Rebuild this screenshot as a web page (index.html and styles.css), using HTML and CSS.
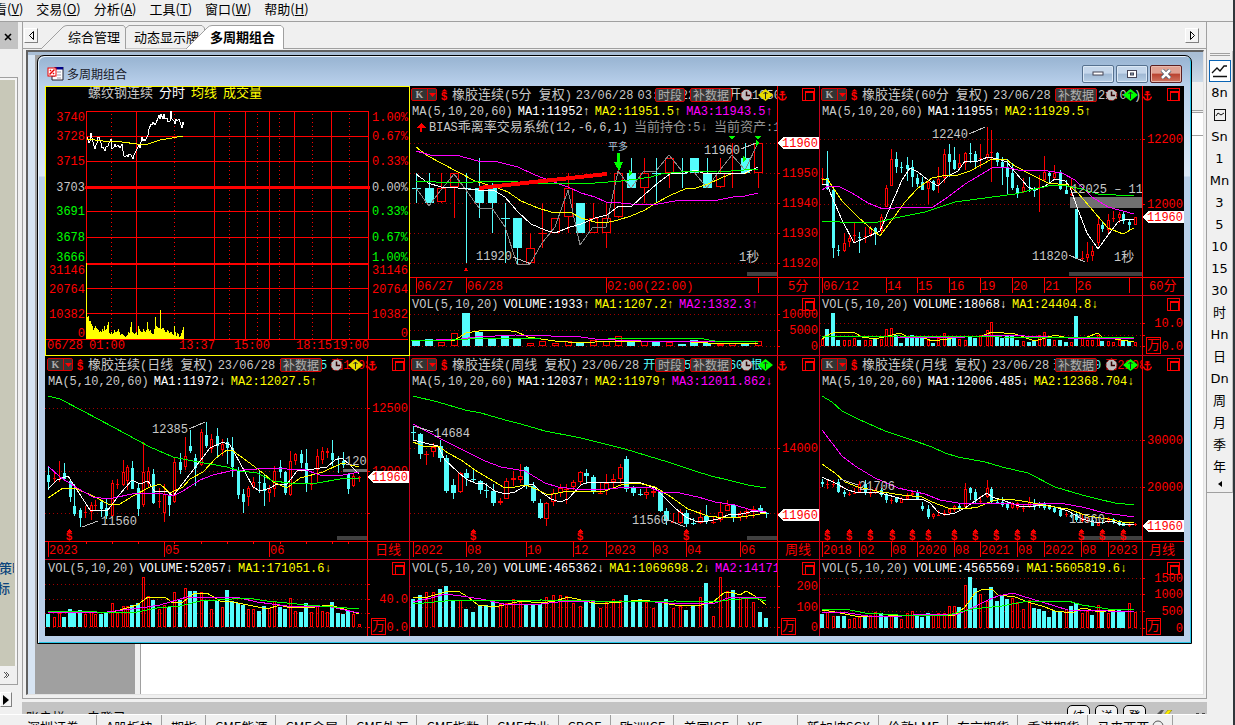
FILE: index.html
```html
<!DOCTYPE html>
<html lang="zh-CN">
<head>
<meta charset="utf-8">
<title>多周期组合</title>
<link rel="stylesheet" href="styles.css">
</head>
<body>
<nav class="menu">
  <a href="#">查看(<u>V</u>)</a><a href="#">交易(<u>O</u>)</a><a href="#">分析(<u>A</u>)</a><a href="#">工具(<u>T</u>)</a><a href="#">窗口(<u>W</u>)</a><a href="#">帮助(<u>H</u>)</a>
</nav>
<div class="app">
  <div class="work">
    <div class="body-row">
      <aside class="dock">
        <div class="dock-head"><button class="plain" aria-label="关闭"><svg width="8" height="8"><path d="M1 1L7 7M7 1L1 7" stroke="#000" stroke-width="1.6"/></svg></button></div>
        <div class="dock-list"><a href="#">策略</a><a href="#">标</a></div>
        <div class="dock-more"><button class="plain" aria-label="更多"><svg width="7" height="8"><path d="M1 1L4 4L1 7M3 1L6 4L3 7" stroke="#555" fill="none"/></svg></button></div>
        <button class="step dock-step" aria-label="下一个"><svg width="6" height="10"><path d="M0 0L6 5L0 10Z"/></svg></button>
      </aside>
      <div class="mid">
        <main class="center">
          <div class="tabs">
            <button class="step" aria-label="向左"><svg width="7" height="9"><path d="M5.500 0.500V8.500L1.500 4.500Z" fill="none" stroke="#000"/></svg></button>
            <button class="tab t1"><svg viewBox="0 0 85 24" preserveAspectRatio="none"><path d="M0 24L22 2Q24 0.500 26 0.500H82.500L84.500 3V24" fill="#f0f0f0" stroke="#a0a0a0"/></svg><span>综合管理</span></button>
            <button class="tab t2"><svg viewBox="0 0 79 24" preserveAspectRatio="none"><path d="M0 3L3 0.500H76L78.500 3V24H0" fill="#f0f0f0" stroke="#a0a0a0"/></svg><span>动态显示牌</span></button>
            <button class="tab t3"><svg viewBox="0 0 98 24" preserveAspectRatio="none"><path d="M0 24L21 3Q23 0.500 26 0.500H95L97.500 3V24" fill="#fff" stroke="#a0a0a0"/></svg><span>多周期组合</span></button>
            <button class="step last" aria-label="向右"><svg width="7" height="9"><path d="M1.500 0.500V8.500L5.500 4.500Z" fill="none" stroke="#000"/></svg></button>
          </div>
          <div class="mdi">
            <div class="back"><div class="back-edge"></div><div class="back-side"></div><div class="back-page"><i class="b1"></i><i class="b2"></i><i class="b3"></i></div></div>
            <section class="window">
              <header class="title">
                <svg width="17" height="14"><path d="M8 0h8v13H5V9h3z" fill="#fff" stroke="#223"/><path d="M8 1h8" stroke="#008" stroke-width="3"/><path d="M10 5h4M10 8h4M10 11h4" stroke="#99a"/><rect x="1" y="1" width="8" height="8" fill="#fff" stroke="#e00"/><path d="M2.500 7.500L7.500 2.500M3 3l1 1M6 6l1 1" stroke="#e00" stroke-width="1.500"/></svg>
                <h1>多周期组合</h1>
                <button class="wb" aria-label="最小化"><svg width="12" height="6"><rect x="1" y="1" width="10" height="3" fill="#fff" stroke="#445"/></svg></button>
                <button class="wb" aria-label="最大化"><svg width="12" height="10"><rect x="1.500" y="1.500" width="9" height="7" fill="#fff" stroke="#445"/><rect x="4.500" y="4" width="3" height="2" fill="#8ab" stroke="#445"/></svg></button>
                <button class="wb close" aria-label="关闭"><svg width="12" height="10"><path d="M2 1L10 9M10 1L2 9" stroke="#456" stroke-width="4"/><path d="M2 1L10 9M10 1L2 9" stroke="#fff" stroke-width="2.500"/></svg></button>
              </header>
              <div class="grid" id="grid"></div>
            </section>
          </div>
        </main>
        <div class="strip"><span class="acct">账户栏</span><span>未登录</span>
          <button class="pill first">结</button><button class="pill">详</button><button class="pill">登</button>
          <svg class="plug" width="52" height="6"><path d="M0 6L6 0H9L5 6Z" fill="#555"/><path d="M8 6L13 0H17L12 6Z" fill="#fe0" stroke="#660" stroke-width=".5"/><path d="M26 5h5M41 4h3M47 4h3" stroke="#222" stroke-width="1.500"/></svg>
        </div>
      </div>
    </div>
    <div class="markets">
      <a href="#" class="m0">深圳证券</a><a href="#">A股板块</a><a href="#">期指</a><a href="#">CME能源</a><a href="#">CME金属</a><a href="#">CME外汇</a><a href="#">CME指数</a><a href="#">CME农业</a><a href="#">CBOE</a><a href="#">欧洲ICE</a><a href="#">美国ICE</a><a href="#">XEurex</a><a href="#">新加坡SGX</a><a href="#">伦敦LME</a><a href="#">东京期货</a><a href="#">香港期货</a><a href="#">马来西亚 <svg width="12" height="12"><circle cx="6" cy="6" r="5" fill="none" stroke="#555"/></svg></a>
    </div>
  </div>
  <aside class="periods">
    <div class="grip"></div>
    <button class="on" aria-label="分时"><svg width="17" height="14"><path d="M1 9L6 4L9 7L13 2H16M2 12.500H16" fill="none" stroke="#111" stroke-width="1.300"/></svg></button>
    <button>8n</button>
    <button aria-label="走势"><svg width="12" height="12"><rect x=".5" y=".5" width="11" height="11" fill="none" stroke="#111"/><path d="M2 7L4 4L7 6L10 4" fill="none" stroke="#111"/></svg></button>
    <button>Sn</button><button>1</button><button>Mn</button><button>3</button><button>5</button><button>10</button><button>15</button><button>30</button><button>时</button><button>Hn</button><button>日</button><button>Dn</button><button>周</button><button>月</button><button>季</button><button>年</button>
    <button class="less" aria-label="收起"><svg width="4" height="6"><path d="M4 0V6L0 3Z"/></svg></button>
  </aside>
</div>
<script src="charts.js"></script>
</body>
</html>
```

FILE: styles.css
```css
* { box-sizing: border-box; }
body { margin: 0; height: 100vh; overflow: hidden; display: flex; flex-direction: column; background: #f0f0f0; color: #000; font: 13px/16px "Noto Sans CJK SC", "Noto Sans", sans-serif; border-right: 2px solid #31373b; }
a { color: inherit; text-decoration: none; }
button { font: inherit; color: inherit; padding: 0; margin: 0; border: 0; background: none; }
svg { display: block; flex: none; }
h1 { margin: 0; font-weight: 400; font-size: 12px; }

.menu { display: flex; gap: 13px; height: 22px; flex: none; border-bottom: 1px solid #a0a0a0; padding-left: 3px; white-space: nowrap; }
.menu a { line-height: 17px; }
.menu a:first-child { margin-left: -22px; }
.app { flex: 1; min-height: 0; display: flex; }
.work { flex: 1; min-width: 0; display: flex; flex-direction: column; }
.body-row { flex: 1; min-height: 0; display: flex; }

.dock { width: 22px; flex: none; display: flex; flex-direction: column; }
.dock-head { width: 18px; height: 27px; background: #c3c3c3; padding: 11px 0 0 4px; }
.dock-list { flex: 1; margin-top: 28px; width: 18px; border: solid #a0a0a0; border-width: 1px 1px 0 0; background: #c8c8b8; box-shadow: inset -2px 2px 0 #f4f4f4; padding-top: 482px; overflow: hidden; color: #0a437c; display: flex; flex-direction: column; gap: 4px; font-weight: 500; }
.dock-list a { white-space: nowrap; width: 15px; overflow: hidden; margin-left: -1px; }
.dock-list a + a { margin-left: -3px; }
.dock-more { width: 18px; height: 19px; border: solid #a0a0a0; border-width: 0 1px 1px 0; padding: 5px 0 0 3px; }
.plain { display: block; }
.step { width: 14px; height: 15px; flex: none; border: 1px solid; border-color: #fff #808080 #808080 #fff; background: #f4f4f4; display: flex; align-items: center; justify-content: center; }
.dock-step { width: 12px; margin: 7px 0 7px; }

.mid { flex: 1; min-width: 0; display: flex; flex-direction: column; }
.center { flex: 1; min-height: 0; display: flex; flex-direction: column; border: solid #a0a0a0; border-width: 0 1px 1px; }
.tabs { height: 27px; flex: none; display: flex; align-items: flex-end; border-bottom: 1px solid #a0a0a0; padding: 0 7px 0 1px; }
.tabs .step { margin-bottom: 5px; }
.tabs .last { margin-left: auto; }
.tab { position: relative; height: 24px; margin-bottom: -1px; white-space: nowrap; }
.tab svg { position: absolute; inset: 0; width: 100%; height: 100%; }
.tab span { position: relative; }
.t1 { width: 85px; margin-left: 3px; padding-left: 27px; text-align: left; }
.t2 { width: 79px; padding-left: 8px; text-align: left; }
.t3 { width: 98px; margin-left: -19px; padding-left: 24px; text-align: left; font-weight: 700; }
.mdi { position: relative; flex: 1; min-height: 0; margin: 1px 2px 3px 3px; border: solid; border-width: 2px 1px 1px 2px; border-color: #606060 #e3e3e3 #e3e3e3 #606060; background: #fff; }
.back { position: absolute; inset: 0; display: flex; border-top: 3px solid #a9bed5; }
.back-edge { width: 7px; background: #d7e4f2; }
.back-side { width: 106px; background: #a0a0a0; border-right: 1px solid #a0a0a0; box-shadow: inset -5px 0 0 #f0f0f0; }
.back-page { flex: 1; }
.back-page i { display: block; }
.b1 { height: 27px; background: linear-gradient(#a9bed5, #ccd9e6); }
.b2 { height: 31px; background: #f0f0f0; border-bottom: 3px double #a0a0a0; }
.b3 { height: 23px; background: #fff; border-bottom: 1px solid #a0a0a0; }

.window { position: absolute; inset: 3px 11px 50px 9px; border: 1px solid #000; border-radius: 7px 7px 0 0; padding: 0 7px 7px; display: flex; flex-direction: column; background: linear-gradient(#97b3d1, #bad1ec 30px, #dbe8f6 120px, #b9cfe9 121px); box-shadow: inset 1px 1px 0 #e8f2fc, inset -1px -1px 0 #28c8ea; }
.title { height: 30px; flex: none; display: flex; align-items: center; gap: 3px; padding: 6px 2px 0; }
.title h1 { flex: 1; color: #181828; }
.wb { width: 32px; height: 18px; margin-top: -1px; border: 1px solid #56718f; border-radius: 2px; background: linear-gradient(#c5d7eb 45%, #9fb8d3 50%, #b8cfe6); box-shadow: inset 0 0 0 1px #dbe8f5; display: flex; align-items: center; justify-content: center; }
.wb + .wb { margin-left: -1px; }
.close { border-color: #5a1f22; background: linear-gradient(#e0a294 45%, #b9412f 50%, #cf7561); box-shadow: inset 0 0 0 1px #eab9ad; }

.grid { flex: 1; min-height: 0; background: #000; display: grid; grid-template-columns: 365fr 410fr 364fr; grid-template-rows: 270fr 280fr; font: 12px/16px "Liberation Mono", "Noto Sans CJK SC", monospace; color: #c8c8c8; }
.cell { min-width: 0; min-height: 0; overflow: hidden; display: flex; flex-direction: column; border-right: 1px solid #c8001e; }
.cell:nth-child(3n) { border-right: 0; }
.cell:nth-child(-n+3) { border-bottom: 1px solid #c8001e; }
.grid .cell.intraday { border: 1px solid #ff0; }
.intraday .names { height: 16px; padding-left: 42px; line-height: 14px; flex: none; display: flex; gap: 6px; font-size: 13px; }
.plot { width: 100%; min-height: 0; overflow: visible; }
.flat { flex: 1; }
.r1 .price { flex: 177 1 0; }
.r1 .vol { flex: 42 1 0; }
.r2 .price { flex: 171 1 0; }
.r2 .vol { flex: 59 1 0; }
.line { display: flex; flex: none; white-space: nowrap; height: 17px; }
.line.ma { height: 16px; }
.main { position: relative; flex: 1; min-width: 0; display: flex; gap: 5px; padding-left: 1px; border-right: 1px solid #f00; }
.text { display: flex; gap: 5px; overflow: hidden; min-width: 0; padding-left: 1px; margin-top: 1px; }
.head .main { gap: 4px; }
.head .text { gap: 4px; padding-left: 0; line-height: 18px; }
.c1 .main { padding-left: 2px; }
.side { width: 41px; flex: none; padding: 2px 0 0 24px; }
.side button { display: block; width: 13px; height: 13px; border: 1px solid #f00; padding: 2px; }
.side button::before { content: ""; display: block; width: 7px; height: 7px; border: 1px solid #f00; border-top-width: 2px; }
.zh { font-size: 13px; line-height: 16px; }
.w { color: #fff; } .y { color: #ff0; } .m { color: #f0f; } .cy { color: #54fcfc; } .r { color: #f00; }
.kbtn { display: flex; width: 26px; height: 13px; margin-top: 2px; flex: none; border: 1px solid #d00; border-radius: 2px; background: #333; color: #aaa; font: 700 10px/11px "Liberation Serif", serif; }
.kbtn span { width: 16px; border-right: 1px solid #d00; text-align: center; }
.kbtn svg { margin: 4px 0 0 1px; }
.gap-s { margin-top: 3px; }
.tools { position: absolute; right: -10px; top: 2px; display: flex; align-items: center; gap: 5px; }
.tools .fn { height: 14px; border: 1px solid #d00; border-radius: 2px; background: #383838; color: #b0b0b0; font: 12px/12px "Noto Sans CJK SC", sans-serif; padding: 0 2px; }
.tools .clock { margin-left: 3px; }

.plot text { fill: #c8c8c8; }
.plot text.r, .plot text.lab { fill: #f00; }
.plot text.g { fill: #0f0; }
.plot text.dim { fill: #909090; }
.plot text.small { font-size: 10px; fill: #a8c4dc; }
.plot g { shape-rendering: crispEdges; }

.strip { height: 12px; margin-top: 3px; background: #c3c3c3; overflow: hidden; display: flex; padding: 7px 0 0 4px; white-space: nowrap; }
.acct { margin-right: 22px; }
.pill { width: 23px; height: 22px; margin: -4px 5px 0 0; flex: none; border: 1px solid #000; border-radius: 5px; background: #f0f0f0; font-size: 12px; }
.pill.first { margin-left: auto; }
.plug { margin: 1px 0 0 4px; }
.markets { height: 11px; flex: none; overflow: hidden; display: flex; margin-right: 2px; border-top: 1px solid #fff; padding-left: 18px; }
.markets a { flex: none; height: 24px; padding: 4px 8px 0 9px; border-right: 1px solid #a0a0a0; white-space: nowrap; }
.markets a svg { display: inline-block; }
.markets .m0 { padding-right: 17px; }

.periods { width: 26px; flex: none; align-self: flex-start; margin-top: 29px; border-bottom: 1px solid #a0a0a0; border-right: 1px solid #c0c0c0; padding: 2px 0 2px; display: flex; flex-direction: column; align-items: center; }
.grip { width: 20px; height: 3px; border: solid #a0a0a0; border-width: 1px 0; margin-bottom: 4px; }
.periods button { width: 22px; height: 22px; display: flex; align-items: center; justify-content: center; font: 13px/16px "DejaVu Sans", "Noto Sans CJK SC", sans-serif; }
.periods .on { border: 1px solid #0a64b4; background: #fff; }
.periods .less { height: 12px; }
```

FILE: charts.js
```js
// Chart data is kept on a grid of thirds of a pixel; each panel has its own origin.
const GRID = 3;
const X60A = [22,37,55,70,86,103,118,133,151,166,181,197,212,229,244,259,277,292,307,322,340,355,370,388,403,418,433,451,466,481,496,515,529,545,562,577,592,607,625,641,656,673,688,703,718,736,752,767,784,800,815,830,848,862,878,893,911,925,941,959];

const panels = [
{ col: 2, row: 1, o: [408,80], box: [410,819], axis: 1107, half: 13,
  name: ['橡胶连续','(5','分',' ','复权',')'], after: '<span>03:00(22:00)</span>', next: '<span class="zh">开</span><span>11950</span>', period: true, dia: '#e6dc00',
  ma: [['MA1:11952↑','w'],['MA2:11951.5↑','y'],['MA3:11943.5↑','m']],
  vl: [['VOLUME:1933↑','w'],['MA1:1207.2↑','y'],['MA2:1332.3↑','m']],
  grid: [190,280,370,460,550], vgrid: [703,751], base: 797,
  labels: [[280,'11950'],[370,'11940'],[460,'11930'],[550,'11920'],[703,'10000'],[751,'5000'],[799,'0']],
  times: [[25,'06/27'],[175,'06/28'],[595,'02:00(22:00)'],[1051,'']], unit: [1139,'5分'], tag: 190, lines: [592,646], bar: [1017,581],
  x: [25,62,100,139,175,214,253,290,328,367,403,442,481,517,556,595,631,670,709,745,784,823,859,898,937,973,1012,1051],
  c: 'd 280 370 325 325|d 280 370 325 368|u 280 370 325 367|u 280 413 280 322|d 280 550 325 325|d 235 413 325 370|d 310 460 325 370|d 370 548 415 415|d 415 552 415 504|u 460 552 505 550|u 370 505 460 460|u 415 460 415 460|u 280 460 325 412|d 370 460 370 460|u 370 460 415 458|u 370 503 415 458|u 270 415 280 412|d 235 323 280 323|u 235 368 280 323|d 235 368 280 280|u 235 325 235 278|d 235 325 280 280|d 235 278 235 278|d 235 323 280 323|u 235 323 280 322|u 190 323 280 280|d 190 280 235 280|u 190 323 190 278',
  v: [780,777,785,760,700,755,777,766,777,790,782,790,783,787,780,783,769,784,782,784,787,792,781,788,793,788,790,782],
  curves: [
   ['#888','25,325 62,379 100,330 139,282 175,330 214,385 253,385 290,440 328,552 367,553 403,490 442,440 481,330 517,496 556,442 595,442 631,272 670,323 709,274 745,274 784,226 823,272 859,276 898,323 937,270 973,226 1012,270 1051,190'],
   ['#ff0','25,202 60,228 100,250 150,275 200,303 260,322 300,335 340,362 390,385 430,397 485,397 520,413 560,425 590,428 630,420 670,409 710,390 745,370 790,345 830,328 865,325 900,313 940,295 975,280 1015,280 1050,262'],
   ['#f0f','25,214 65,225 145,226 210,244 270,245 330,260 380,285 430,303 480,322 520,340 560,352 595,367 640,370 700,374 750,372 820,361 930,361 975,352 1010,348 1050,338'],
   ['#fff','25,283 60,308 100,322 150,325 210,331 260,334 290,350 330,397 370,433 410,451 440,460 485,442 520,433 560,415 597,406 632,379 672,379 710,343 750,310 785,283 830,278 860,271 885,280 1010,280 1050,262'],
   ['#0f0','25,304 140,308 250,304 330,307 390,310 500,309 560,308 640,304 690,298 730,290 760,282 820,276 930,274 970,273 1050,268'],
   ['#f00','214,325 598,281',4]],
  vcurves: [
   ['#ff0','10,781 140,781 175,760 214,753 290,750 328,755 360,772 400,778 440,784 480,786 560,785 620,783 800,784 850,786 900,788 1050,790'],
   ['#f0f','10,782 160,778 200,770 320,766 430,768 520,772 560,778 620,781 700,783 800,784 950,785 1050,787'],
   ['#0f0','10,781 130,781 180,776 400,773 600,775 870,775 920,782 1050,784']],
  texts: [[64,142,'BIAS乖离率交易系统(12,-6,6,1)'],[679,142,'当前持仓:5↓','dim'],[918,142,'当前资产:1','dim'],[600,199,'平多','small'],[888,209,'11960'],[203,529,'11920'],[992,532,'1秒']],
  ptr: ['1000,208 1045,190','315,530 370,551'], marks: 'trade' },
{ col: 3, row: 1, o: [815,80], box: [820,1184], axis: 981, half: 4,
  name: ['橡胶连续','(60','分',' ','复权',')'], after: '<span>10:00(21:00)</span>', next: '', dia: '#0f0',
  ma: [['MA1:11955↑','w'],['MA2:11929.5↑','y']], vl: [['VOLUME:18068↓','w'],['MA1:24404.8↓','y']],
  grid: [178,373], vgrid: [730,766], base: 797, labels: [[178,'12200'],[373,'12000'],[730,'10.0'],[799,'0.0']], wan: 797,
  times: [[22,'06/12'],[212,'14'],[307,'15'],[403,'16'],[496,'19'],[592,'20'],[688,'21'],[784,'26'],[941,'']], unit: [1003,'60分'], tag: 412, lines: [592,646], bar: [762,581], band: [765,351,34],
  x: X60A,
  c: 'u 265 315 295 295|d 213 330 295 328|d 325 533 330 503|d 495 527 510 510|u 460 517 490 512|u 463 500 473 487|u 430 487 466 466|d 457 518 472 472|u 440 488 468 468|u 437 472 444 463|d 440 495 443 458|u 402 463 412 452|u 315 382 325 380|u 208 318 238 317|d 217 278 237 262|d 245 280 262 262|d 231 303 255 268|d 240 320 262 290|d 282 322 295 313|d 290 330 305 330|u 300 373 305 328|d 300 333 303 330|u 262 340 298 313|u 208 310 222 293|d 192 290 222 246|d 200 270 240 268|u 222 270 250 263|u 215 270 218 250|d 190 250 218 218|d 213 262 222 245|u 192 265 235 235|u 140 240 222 235|u 150 305 216 216|d 215 258 218 246|d 230 315 246 262|d 238 342 262 290|d 250 330 278 325|d 315 353 325 340|u 295 340 322 335|d 292 335 322 322|d 322 352 330 330|u 285 395 320 320|u 228 305 275 300|d 275 310 278 288|u 255 300 280 293|d 270 330 275 328|d 300 342 330 342|u 293 348 342 342|d 387 537 387 537|u 513 543 535 535|u 487 547 522 533|u 498 543 513 528|u 415 497 433 488|d 422 455 435 448|u 402 465 420 450|u 393 425 415 415|u 397 430 402 415|d 397 433 402 422|d 420 450 426 434|u 410 435 412 434',
  v: [778,748,700,780,779,781,775,779,779,779,773,778,748,745,766,788,773,766,770,775,780,788,773,760,772,773,778,781,769,773,766,750,727,766,775,768,767,780,782,787,779,766,755,778,779,779,785,787,708,775,779,780,766,782,782,786,780,779,783,787],
  curves: [
   ['#fff','20,313 36,313 50,350 80,420 118,490 150,473 195,453 220,395 260,300 285,263 310,275 340,300 370,317 400,288 430,272 450,242 490,242 520,230 550,237 575,247 600,275 640,320 660,330 690,317 720,298 750,302 765,320 785,380 815,460 848,508 880,465 910,425 930,418 958,418'],
   ['#ff0','20,298 38,300 80,362 130,410 160,437 195,468 230,420 270,367 310,325 350,293 380,288 430,286 465,272 530,237 575,240 600,257 650,285 700,310 760,315 790,340 840,398 880,443 925,463 957,444'],
   ['#f0f','20,330 40,319 70,319 110,340 160,370 205,388 280,380 355,381 400,352 450,313 530,263 570,262 610,271 700,273 740,280 780,300 830,350 880,382 957,402'],
   ['#0f0','20,427 60,424 90,428 190,426 240,413 330,395 420,367 530,351 600,342 710,315 740,314 800,328 850,341 957,349']],
  vcurves: [
   ['#ff0','20,778 40,765 60,755 120,758 140,770 180,778 220,768 255,760 280,770 320,772 350,782 400,778 420,770 500,768 530,757 600,762 660,783 720,765 760,775 780,770 815,770 848,760 860,770 900,778 957,785'],
   ['#f0f','20,770 60,768 160,768 250,770 350,775 450,770 560,765 700,770 760,775 957,775'],
   ['#0f0','20,772 250,768 560,770 957,775']],
  texts: [[350,161,'12240'],[769,326,'12025 – 119'],[650,527,'11820'],[898,532,'1秒']], ptr: ['462,161 510,142','762,526 810,547'] },
{ col: 1, row: 2, o: [40,350], box: [45,409], axis: 981, half: 4,
  name: ['橡胶连续','(','日线',' ','复权',')'], after: '<span class="cy">开12055</span>', next: '<span class="r">高12085</span>', dia: '#e6dc00',
  ma: [['MA1:11972↓','w'],['MA2:12027.5↑','y']], vl: [['VOLUME:52057↓','w'],['MA1:171051.6↓','y']],
  grid: [175,364,488], vgrid: [703,748,790], base: 830, labels: [[175,'12500'],[364,'12000'],[748,'40.0'],[832,'0.0']], wan: 830,
  times: [[25,'2023'],[373,'05'],[688,'06']], ticks: [137,215,295,403,484,562,640,721,799,877,925], unit: [1005,'日线'], tag: 380, lines: [574,628], bar: [891,563], band: [908,357,8],
  x: [25,41,58,73,89,103,121,136,152,166,184,199,215,232,248,262,277,295,310,325,340,358,373,388,403,421,436,451,466,484,499,514,532,547,562,577,595,610,625,640,658,673,688,703,721,736,751,766,784,799,814,832,847,862,877,895,910,925,940,958],
  c: 'd 350 420 375 395|u 370 398 385 385|u 333 396 387 387|d 340 390 370 386|d 386 455 393 440|d 402 498 467 492|d 474 530 480 503|u 468 505 487 487|u 455 510 465 485|u 450 482 465 465|d 450 502 455 478|d 445 507 475 498|u 390 502 400 497|u 388 417 403 403|u 330 407 365 405|u 345 420 350 392|d 333 418 353 416|d 400 497 413 477|u 277 470 367 465|u 350 410 362 402|d 358 462 373 460|u 415 473 452 452|u 402 515 433 490|d 433 497 434 465|u 325 460 337 455|d 308 373 336 360|u 260 360 317 352|d 240 308 287 302|d 312 408 325 355|u 238 347 247 345|d 215 293 256 288|u 252 310 267 297|d 233 323 258 288|u 267 317 282 300|d 265 343 277 295|d 262 382 294 352|d 350 447 362 436|d 417 488 433 455|u 408 467 413 440|u 382 417 395 410|d 360 430 397 397|d 375 467 400 424|u 405 457 418 430|u 348 442 362 418|d 330 383 350 365|d 363 435 367 430|u 303 437 332 435|u 308 345 313 332|d 300 355 312 338|d 297 425 338 402|u 378 420 402 402|u 297 395 318 360|u 290 343 303 330|u 293 325 303 308|d 270 347 308 330|d 318 370 325 325|d 307 353 333 346|d 368 432 372 418|u 370 412 378 408|u 378 395 382 382',
  v: [792,800,790,800,777,787,780,793,787,793,792,790,760,785,769,769,765,759,682,738,750,778,765,770,727,750,715,723,723,725,752,778,753,771,720,753,759,766,778,778,783,768,775,752,771,777,745,784,786,759,787,768,784,786,756,790,791,784,793,823],
  curves: [
   ['#fff','25,418 50,390 85,378 110,420 150,480 200,482 240,433 275,390 300,403 325,394 345,425 380,422 400,437 430,400 470,345 510,295 550,276 570,285 600,340 640,412 660,422 690,415 710,403 740,403 770,362 800,360 860,350 885,330 905,324 930,345 957,372'],
   ['#ff0','25,445 70,415 110,416 160,438 210,465 240,462 280,437 330,412 360,402 390,430 430,410 450,387 490,365 530,320 560,300 580,302 620,332 670,368 700,397 740,413 780,383 850,367 905,340 957,352'],
   ['#f0f','25,349 60,382 110,415 160,440 205,448 290,428 370,433 400,438 430,423 480,390 520,375 570,362 650,358 705,353 740,357 790,358 840,375 910,375 957,367'],
   ['#0f0','25,138 60,148 130,182 220,232 330,292 400,322 460,334 560,350 600,362 650,370 700,393 750,400 830,400 900,387 957,385']],
  vcurves: [
   ['#ff0','25,790 100,785 160,788 215,785 240,780 290,765 325,742 375,742 400,760 430,755 465,728 500,728 540,752 580,755 640,767 680,777 720,765 740,770 800,773 870,765 920,780 957,793'],
   ['#f0f','25,790 200,787 300,775 360,765 440,742 600,745 650,757 740,768 860,768 900,778 957,788'],
   ['#0f0','25,784 100,784 170,787 290,786 350,773 420,767 480,752 530,750 620,745 680,752 800,765 920,773 957,777']],
  texts: [[335,237,'12385'],[183,513,'11560'],[914,333,'1202']], ptr: ['447,236 495,216','125,532 175,512'], dollars: [87] },
{ col: 2, row: 2, o: [408,350], box: [410,819], axis: 1107, half: 7,
  name: ['橡胶连续','(','周线',' ','复权',')'], after: '<span class="cy">开12085</span>', next: '<span class="cy">收11960 根</span>', period: true, dia: '#0f0',
  ma: [['MA1:12037↑','w'],['MA2:11979↑','y'],['MA3:12011.862↓','m']], vl: [['VOLUME:465362↓','w'],['MA1:1069698.2↓','y'],['MA2:1417103.6','m']],
  grid: [295,488], vgrid: [709,771], base: 830, labels: [[295,'14000'],[709,'200'],[771,'100'],[832,'0']], wan: 830,
  times: [[16,'2022'],[175,'08'],[355,'10'],[496,'12'],[595,'2023'],[736,'03'],[835,'04'],[997,'06']], unit: [1130,'周线'], tag: 494, lines: [574,628], bar: [1017,563],
  x: [16,37,55,76,97,115,136,157,175,196,217,235,256,277,295,316,337,355,376,397,415,436,457,475,496,517,535,556,577,595,616,637,655,676,697,715,736,757,775,796,817,835,856,877,895,916,937,956,976,997,1015,1036,1057,1075],
  c: 'd 228 270 246 246|d 248 327 252 312|u 303 345 313 313|u 280 320 292 306|d 270 337 288 323|d 315 428 324 423|d 388 447 405 430|u 367 428 370 427|d 358 408 370 383|d 360 400 388 388|d 390 432 393 420|d 400 443 420 420|d 402 468 423 460|u 443 466 452 458|u 385 448 394 446|u 362 408 384 391|u 342 400 378 390|d 347 418 351 408|d 396 460 408 453|d 448 508 460 503|u 455 527 460 506|u 417 467 430 455|u 403 440 415 430|u 402 462 417 417|u 390 420 397 410|u 363 407 367 395|d 357 403 369 378|d 375 432 381 424|u 397 430 428 428|u 372 434 400 421|u 372 410 388 395|u 342 402 350 388|d 318 425 327 417|d 408 437 413 430|d 418 438 433 433|u 413 448 427 436|u 417 442 424 430|d 424 485 427 483|d 475 525 483 513|u 490 520 515 515|u 478 522 487 518|d 480 530 488 522|d 505 525 520 520|u 480 522 500 520|d 465 523 498 513|u 498 523 515 515|u 458 515 486 510|u 450 484 466 482|d 463 517 465 500|u 483 512 490 500|u 473 507 482 493|u 467 503 478 478|d 465 487 474 484|d 485 503 490 490',
  v: [747,735,725,725,717,708,752,749,777,786,765,765,756,763,760,748,756,765,762,762,740,736,736,739,760,769,752,755,773,757,748,749,735,750,748,755,773,755,747,773,769,780,766,742,699,797,682,722,720,740,745,755,786,804],
  curves: [
   ['#fff','16,270 50,280 90,288 110,330 150,365 175,388 200,400 230,402 260,423 290,431 320,427 350,408 375,402 400,425 430,448 457,455 480,447 520,405 540,396 600,396 660,396 700,400 740,415 770,445 800,475 835,500 860,512 900,512 930,508 960,495 1000,493 1040,483 1075,490'],
   ['#ff0','16,275 50,290 90,288 120,310 160,330 200,360 240,385 290,415 320,412 355,405 390,420 420,435 450,428 480,424 590,424 640,405 690,398 740,412 790,440 840,478 900,498 950,505 1000,502 1040,496 1075,490'],
   ['#f0f','16,222 60,245 110,272 170,303 230,332 280,350 350,363 410,398 450,410 500,418 550,420 600,417 660,411 730,413 760,425 800,426 870,440 920,456 980,466 1030,480 1075,487'],
   ['#0f0','16,138 90,155 170,181 220,188 290,210 340,222 410,243 520,263 590,283 650,296 720,318 780,337 860,362 910,378 960,391 1020,404 1075,415']],
  vcurves: [
   ['#ff0','16,742 60,740 110,725 150,724 180,740 210,765 260,772 300,762 340,752 400,760 440,752 480,741 520,750 570,763 640,757 700,750 750,757 800,765 880,765 915,757 950,727 970,725 995,735 1015,724 1040,737 1075,765'],
   ['#f0f','16,755 70,745 110,733 160,738 220,748 300,765 400,763 450,755 550,752 640,755 700,752 780,758 850,762 920,760 960,745 1030,740 1075,745'],
   ['#0f0','16,763 110,752 400,750 560,752 640,757 800,752 920,755 960,750 1040,745 1075,752']],
  texts: [[79,248,'14684'],[672,509,'11560']], ptr: ['18,228 75,246','775,506 832,530'], dollars: [194,516,834] },
{ col: 3, row: 2, o: [815,350], box: [820,1184], axis: 981, half: 4,
  name: ['橡胶连续','(','月线',' ','复权',')'], after: '<span class="cy">开12080</span>', next: '<span class="r">高22085</span>', dia: '#0f0',
  ma: [['MA1:12006.485↓','w'],['MA2:12368.704↓','y']], vl: [['VOLUME:4565569↓','w'],['MA1:5605819.6↓','y']],
  grid: [271,412], vgrid: [685,733,783], base: 833, labels: [[271,'30000'],[412,'20000'],[685,'1500'],[733,'1000'],[783,'500'],[835,'0']], wan: 830,
  times: [[22,'2018'],[133,'02'],[229,'08'],[307,'2020'],[418,'08'],[496,'2021'],[607,'08'],[688,'2022'],[799,'08'],[878,'2023']], unit: [1003,'月线'], tag: 527, lines: [574,628], bar: [800,563],
  x: X60A,
  c: 'd 388 412 395 402|u 388 417 403 403|u 390 410 402 402|d 388 430 397 426|d 420 440 425 433|u 425 437 432 432|u 413 433 430 430|u 393 430 402 427|d 390 435 403 430|u 415 440 430 430|u 415 432 420 430|d 415 440 420 436|d 428 460 435 450|u 445 462 450 450|d 440 460 445 456|u 440 460 445 458|u 430 450 438 446|u 420 440 430 435|d 420 450 427 447|d 455 483 468 478|d 465 507 478 500|u 488 508 493 502|u 480 497 495 495|u 480 498 490 490|u 473 495 478 490|u 465 485 468 480|d 462 480 467 474|u 400 475 418 470|d 410 450 413 430|d 417 460 425 450|u 437 460 452 452|u 390 445 415 440|d 410 458 417 455|d 450 462 457 457|d 440 470 455 465|d 455 480 462 475|u 455 478 462 474|u 455 480 460 475|u 465 487 475 475|u 440 475 457 470|d 447 480 462 470|d 457 475 465 465|d 455 480 460 473|d 465 480 470 476|d 470 488 475 485|d 475 502 480 497|u 485 500 493 493|d 485 505 495 495|d 488 517 493 510|u 495 520 503 513|u 500 518 510 510|d 500 528 510 527|u 515 528 520 527|d 510 522 516 516|u 500 520 505 517|d 505 522 507 515|d 510 527 515 525|d 515 528 520 527|u 517 530 525 525|u 518 528 522 522',
  v: [792,785,797,797,797,806,803,800,802,795,785,790,797,798,800,808,790,782,798,802,790,792,790,790,769,768,771,706,681,714,733,754,711,753,738,747,745,757,778,750,774,777,783,801,783,787,778,768,760,788,782,796,766,785,788,780,780,783,760,785],
  curves: [
   ['#fff','22,382 60,400 100,420 120,427 180,425 220,435 260,447 320,447 345,460 370,485 390,494 420,490 450,475 480,452 515,430 530,440 570,452 620,470 700,465 760,483 800,507 850,520 890,513 920,525 957,522'],
   ['#ff0','22,343 60,370 90,395 130,410 200,427 260,435 320,442 350,455 400,473 450,477 490,472 530,453 560,447 600,450 640,457 700,467 760,478 820,497 880,508 920,517 957,519'],
   ['#f0f','22,241 50,280 80,318 120,348 180,383 250,415 330,433 375,450 430,458 550,460 640,465 700,460 750,461 800,472 870,488 957,500'],
   ['#0f0','22,139 50,157 80,182 130,208 210,244 290,270 350,292 390,310 430,322 510,336 560,350 640,370 720,412 800,436 850,447 900,460 957,466']],
  vcurves: [
   ['#ff0','22,780 60,785 120,798 160,802 220,797 300,796 420,795 450,772 480,730 505,718 530,718 550,735 600,742 640,755 690,770 720,783 770,788 800,775 820,777 850,785 900,780 957,778'],
   ['#f0f','22,786 100,790 160,797 260,797 330,793 430,793 470,775 520,750 550,738 595,728 620,738 680,757 720,768 760,780 880,783 957,782'],
   ['#0f0','22,778 90,778 150,788 250,795 400,795 470,777 560,767 640,752 760,752 800,765 880,778 957,780']],
  texts: [[131,407,'21706'],[762,508,'11560']], ptr: ['75,388 128,405'], dollars: [37,101,164,230,291,339,417,480,542,605,654,798,860,924] }
];

function pen(o) {
  const X = x => Math.round(o[0] + x / GRID), Y = y => Math.round(o[1] + y / GRID);
  const zh = s => s.replace(/[\u4e00-\u9fff]+/g, m => `<tspan font-size="13">${m}</tspan>`);
  return {
    X, Y,
    v: (x, a, b, c, e = '') => `<path d="M${X(x)}.5 ${Y(a)}V${Y(b)}" stroke="${c}" ${e}/>`,
    h: (y, a, b, c, e = '') => `<path d="M${X(a)} ${Y(y)}.5H${X(b)}" stroke="${c}" ${e}/>`,
    r: (x, y, w, h, e) => `<rect x="${x}" y="${y}" width="${w}" height="${h}" ${e}/>`,
    t: (x, y, s, c = '', a = 'start') => `<text x="${X(x)}" y="${Y(y) + 4}" class="${c}" text-anchor="${a}">${c === 'small' ? s : zh(s)}</text>`,
    c: ([c, p, w = 1]) => `<polyline fill="none" stroke="${c}" stroke-width="${w}" points="${p.split(' ').map(q => { const [x, y] = q.split(','); return X(+x) + ',' + Y(+y); }).join(' ')}"/>`
  };
}
const svg = (cls, x, y, w, h, s) => `<svg class="plot ${cls}" viewBox="${x} ${y} ${w} ${h}" preserveAspectRatio="xMinYMin meet"><g>${s}</g></svg>`;
const RED = '#f00', CY = '#54fcfc', DOT = 'stroke-dasharray="1 3"';
const dollarIcon = '<svg class="gap-s" width="7" height="12"><path d="M3.500 0L6.500 2.500H0.500Z" fill="#f00"/><text x="0" y="11" font-size="11" font-weight="700" fill="#f00" font-family="Liberation Sans">$</text></svg>';
const clock = '<svg class="clock" width="13" height="12"><circle cx="6.500" cy="6" r="5.500" fill="#c0c0c0" stroke="#a00" stroke-dasharray="2 2"/><path d="M6.500 2.500V6.500H10" stroke="#300" stroke-width="1.500" fill="none"/></svg>';
const diamond = c => `<svg width="15" height="12"><path d="M7.500 0L15 6L7.500 12L0 6Z" fill="${c}"/><path d="M7.500 10V3M5.500 5L7.500 3L9.500 5" stroke="#222" fill="none"/></svg>`;
const anchor = '<svg width="9" height="11"><path d="M4.500 1V10M2.500 2H6.500M1.500 4.500H7.500M0.500 6.500Q1 9.500 4.500 10Q8 9.500 8.500 6.500" stroke="#f00" stroke-width="1.500" fill="none"/></svg>';
const boxBtn = '<div class="side"><button aria-label="最大化"></button></div>';

function intraday() {
  const p = pen([40, 80]);
  let s = '';
  [92,167,244,394,472,625,700].forEach(y => s += p.h(y, 139, 985, RED));
  [139,287,523,616,688,763,874,985].forEach(x => s += p.v(x, 92, 777, RED));
  [212,403,568,652,717,817,928].forEach(x => s += p.v(x, 102, 777, RED, DOT));
  s += p.h(320, 136, 990, RED, 'stroke-width="3"') + p.h(548, 139, 985, RED, 'stroke-width="2"') + p.h(777, 18, 1105, RED);
  const vol = [66,60,68,55,54,44,40,28,32,40,34,30,26,22,24,20,30,24,40,26,22,30,42,50,18,16,20,15,18,28,22,20,24,30,22,12,16,14,12,10,6,4,8,12,22,18,36,52,20,18,14,18,22,12,38,30,24,20,22,30,24,18,20,28,50,30,24,26,18,14,16,30,66,40,36,34,32,86,30,32,34,22,26,20,22,28,24,18,20,22,16,12,38,20,10,18,14,6,8,18,26,36];
  const n = vol.length;
  vol.forEach((v, i) => { const h = Math.round(v / GRID); s += p.r(87 + Math.floor(i * 97 / n), 339 - h, 1, h, 'fill="#ff0"'); });
  s += p.v(139, 549, 777, '#ff0');
  s += p.c(['#fff', '142,170 145,180 148,190 151,182 154,158 156,175 160,185 164,207 168,195 171,190 175,172 178,170 182,188 187,203 190,200 194,213 198,200 203,197 206,190 210,183 214,178 217,207 221,200 225,193 229,202 234,196 240,203 246,193 250,212 253,228 256,232 260,226 264,232 268,222 273,224 278,238 283,226 287,213 292,208 296,195 299,203 302,185 305,170 309,182 313,178 316,184 321,172 325,165 328,146 332,132 336,136 340,125 344,135 348,128 353,115 356,106 360,116 364,103 368,116 372,102 376,118 381,115 384,127 389,122 391,104 394,92 397,118 401,122 404,133 408,118 412,122 416,116 421,125 425,145 428,126 431,136']);
  s += p.c(['#ff0', '142,176 190,182 245,187 290,193 325,193 360,180 395,173 428,169']);
  const L = ['3740','3728','3715','3703','3691','3678','3666','31146','20764','10382','0'];
  const R = ['1.00%','0.67%','0.33%','0.00%','0.33%','0.67%','1.00%','31146','20764','10382','0'];
  [110,167,244,320,394,472,530,569,626,701,758].forEach((y, i) => {
    const c = i === 3 ? '' : i > 3 && i < 7 ? 'g' : 'lab';
    s += p.t(136, y, L[i], c, 'end') + p.t(1104, y, R[i], c, 'end');
  });
  [[22,'06/28'],[148,'01:00'],[417,'13:37'],[583,'15:00'],[768,'18:15'],[878,'19:00']].forEach(([x, t]) => s += p.t(x, 796, t, 'lab'));
  return `<div class="cell intraday"><div class="names"><span>螺纹钢连续</span><span class="w">分时</span><span class="y">均线</span><span class="y">成交量</span></div>${svg('flat', 46, 103, 363, 252, s)}</div>`;
}

function panel(d) {
  const p = pen(d.o), { X, Y } = p, w = d.box[1] - d.box[0], left = (d.box[0] - d.o[0]) * GRID, ax = d.axis, right = (d.box[1] - d.o[0]) * GRID;
  const top = d.row === 1 ? 119 : 389, mid = d.row === 1 ? 296 : 560, vt = mid + 17, end = d.row === 1 ? 355 : 636;
  const clip = `clip${d.col}${d.row}`;
  let s = `<clipPath id="${clip}"><rect x="${d.box[0]}" y="${top}" width="${X(ax) - d.box[0]}" height="${mid - top}"/></clipPath>`, q = '';
  const hb = Math.round(d.half / GRID);
  d.grid.forEach(y => s += p.h(y, left, ax, '#a00000', DOT) + p.h(y, ax, ax + 9, RED));
  [...d.vgrid, d.base].forEach(y => q += p.h(y, left, ax, '#a00000', DOT) + p.h(y, ax, ax + 9, RED));
  if (d.band) s += p.r(X(d.band[0]), Y(d.band[1]), X(ax) - X(d.band[0]), Math.round(d.band[2] / GRID), 'fill="#707070"');
  s += p.r(X(d.bar[0]), Y(d.bar[1]) - 2, X(ax) - X(d.bar[0]), 4, 'fill="#404040"');
  d.c.split('|').forEach((k, i) => {
    const [u, ...n] = k.split(' '), [hi, lo, a, b] = n.map(Number), x = d.x[i], col = u === 'u' ? RED : CY, x0 = X(x) - hb, W = hb * 2 + 1;
    const H = Y(b) - Y(a);
    if (H < 2) s += p.v(x, hi, lo, col) + p.r(x0, Y(a), W, 1, `fill="${col}"`);
    else if (u === 'u') s += p.v(x, hi, a, col) + p.v(x, b, lo, col) + `<rect x="${x0}.5" y="${Y(a)}.5" width="${W - 1}" height="${H - 1}" fill="none" stroke="${col}"/>`;
    else s += p.v(x, hi, lo, col) + p.r(x0, Y(a), W, H, `fill="${col}"`);
    const vy = Y(d.v[i]), vh = Y(d.base) - vy, vb = Math.max(hb, 2);
    q += u === 'u' ? `<rect x="${X(x) - vb + 1}.5" y="${vy}.5" width="${vb * 2 - 2}" height="${Math.max(vh - 1, 1)}" fill="none" stroke="${RED}"/>` : p.r(X(x) - vb, vy, vb * 2, vh, `fill="${CY}"`);
  });
  d.curves.forEach(c => s += p.c(c));
  d.vcurves.forEach(c => q += p.c(c));
  d.ptr.forEach(t => s += p.c(['#c0c0c0', t]));
  s += `<g clip-path="url(#${clip})">${d.texts.map(t => p.t(...t)).join('')}</g>`;
  if (d.marks) {
    s += '<path d="M416 128L421 123L426 128H422V132H420V128Z" fill="#f00"/><path d="M617 153h3v9h3l-4 9-5-9h3z" fill="#0f0"/>';
    [[732,136],[758,136]].forEach(([x, y]) => s += `<path d="M${x - 3} ${y}h6l-3 4z" fill="#0f0"/>`);
    [[630,173],[744,159],[757,143]].forEach(([x, y]) => s += `<path d="M${x - 1} ${y - 3}l3 3-3 4z" fill="#0f0"/>`);
    s += '<path d="M466 267l2 4h-4z" fill="#f00"/>';
  }
  (d.dollars || []).forEach(x => s += `<path d="M${X(x)} ${Y(538)}l3 3h-6z" fill="#f00"/><text class="r" x="${X(x)}" y="${Y(570)}" font-size="11" font-weight="700" font-family="Liberation Sans" text-anchor="middle">$</text>`);
  d.lines.forEach((y, i) => s += p.h(y, left, right, i ? '#c8001e' : RED));
  d.times.forEach(([x, t]) => s += p.v(x, d.lines[0], d.lines[0] + 48, RED) + (t ? p.t(x + 3, d.lines[0] + 26, t, 'lab') : ''));
  (d.ticks || []).forEach(x => s += p.v(x, 574, 582, RED));
  s += p.t(d.unit[0], d.lines[0] + 27, d.unit[1], 'lab');
  s += `<path d="M${X(ax)}.5 ${top}V${mid - 1}" stroke="#f00"/>`;
  q += `<path d="M${X(ax)}.5 ${vt}V${end}" stroke="#f00"/>`;
  d.labels.forEach(([y, t]) => { const m = p.t(right - 3, y, t, 'lab', 'end'); if (y < 600) s += m; else q += m; });
  if (d.wan) q += `<rect x="${X(ax) + 4}.5" y="${Y(d.wan) - 9}.5" width="14" height="16" fill="#000" stroke="#f00"/>` + p.t(ax + 15, d.wan - 1, '万', 'lab');
  s += `<path d="M${X(ax)} ${Y(d.tag)}L${X(ax) + 6} ${Y(d.tag) - 6}H${d.box[1]}V${Y(d.tag) + 6}H${X(ax) + 6}Z" fill="#fff"/>` + p.t(right - 3, d.tag, '11960', 'lab', 'end');
  const nm = d.name.map(t => /[\u4e00-\u9fff]/.test(t) ? `<span class="zh">${t}</span>` : t).join('');
  const seg = (a, first) => `<span>${first}</span>` + a.map(([t, c]) => `<span class="${c}">${t}</span>`).join('');
  return `<div class="cell r${d.row} c${d.col}">
    <div class="line head"><div class="main"><button class="kbtn" aria-label="K线"><span>K</span><svg width="7" height="4"><path d="M0 0H7L3.500 4Z" fill="#f00"/></svg></button>${dollarIcon}<div class="text"><span>${nm}</span><span>23/06/28</span>${d.after}${d.next}</div>
      <div class="tools">${d.period ? '<button class="fn">时段</button>' : ''}<button class="fn">补数据</button>${clock}${diamond(d.dia)}${anchor}</div></div>${boxBtn}</div>
    <div class="line ma"><div class="main"><div class="text">${seg(d.ma, 'MA(5,10,20,60)')}</div></div><div class="side"></div></div>
    ${svg('price', d.box[0], top, w, mid - top, s)}
    <div class="line"><div class="main"><div class="text">${seg(d.vl, 'VOL(5,10,20)')}</div></div>${boxBtn}</div>
    ${svg('vol', d.box[0], vt, w, end - vt, q)}</div>`;
}

document.getElementById('grid').innerHTML = intraday() + panels.map(panel).join('');
```
